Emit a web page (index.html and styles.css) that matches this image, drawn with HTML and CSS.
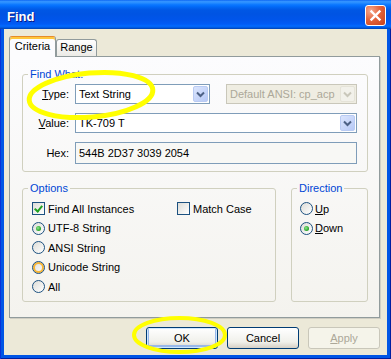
FILE: index.html
```html
<!DOCTYPE html>
<html lang="en">
<head>
    <meta charset="UTF-8">
    <title>Find</title>
    <link rel="stylesheet" href="styles.css">
</head>
<body>
    <div class="window">
        <div class="titlebar">
            <span class="title">Find</span>
            <span class="close">
                <svg viewBox="0 0 19 19" width="19" height="19">
                    <path d="M5.5 5.5 L13.5 13.5 M13.5 5.5 L5.5 13.5" stroke="#fff" stroke-width="2.4" stroke-linecap="square" fill="none"/>
                </svg>
            </span>
        </div>
        <div class="frame">
            <div class="client">
                <div class="tabs">
                    <div class="tab active">Criteria</div>
                    <div class="tab">Range</div>
                </div>
                <div class="panel">
                    <fieldset class="group find-what">
                        <legend>Find What:</legend>
                        <div class="fields">
                            <span class="lbl"><u>T</u>ype:</span>
                            <div class="type-row">
                                <div class="combo type-combo">
                                    <span class="val">Text String</span>
                                    <span class="drop"><svg viewBox="0 0 15 16" width="15" height="16"><path d="M4 6.5 L7.5 10 L11 6.5" stroke="#4d6185" stroke-width="2" fill="none"/></svg></span>
                                </div>
                                <div class="combo enc-combo disabled">
                                    <span class="val">Default ANSI: cp_acp</span>
                                    <span class="drop"><svg viewBox="0 0 15 16" width="15" height="16"><path d="M4 6.5 L7.5 10 L11 6.5" stroke="#c9c7ba" stroke-width="2" fill="none"/></svg></span>
                                </div>
                            </div>
                            <span class="lbl"><u>V</u>alue:</span>
                            <div class="combo">
                                <span class="val">TK-709 T</span>
                                <span class="drop"><svg viewBox="0 0 15 16" width="15" height="16"><path d="M4 6.5 L7.5 10 L11 6.5" stroke="#4d6185" stroke-width="2" fill="none"/></svg></span>
                            </div>
                            <span class="lbl">Hex:</span>
                            <div class="textbox">544B 2D37 3039 2054</div>
                        </div>
                    </fieldset>

                    <div class="lower">
                        <fieldset class="group options">
                            <legend>Options</legend>
                            <div class="opts">
                                <div class="opt-row">
                                    <label class="item find-all"><span class="check checked"></span>Find All Instances</label>
                                    <label class="item"><span class="check"></span>Match Case</label>
                                </div>
                                <label class="item"><span class="radio checked"></span>UTF-8 String</label>
                                <label class="item"><span class="radio"></span>ANSI String</label>
                                <label class="item"><span class="radio hot"></span>Unicode String</label>
                                <label class="item"><span class="radio"></span>All</label>
                            </div>
                        </fieldset>
                        <fieldset class="group direction">
                            <legend>Direction</legend>
                            <div class="opts dir">
                                <label class="item"><span class="radio"></span><span><u>U</u>p</span></label>
                                <label class="item"><span class="radio checked"></span><span><u>D</u>own</span></label>
                            </div>
                        </fieldset>
                    </div>
                </div>
                <div class="buttons">
                    <button class="btn default">OK</button>
                    <button class="btn">Cancel</button>
                    <button class="btn" disabled><u>A</u>pply</button>
                </div>
            </div>
        </div>

        <svg class="marks" viewBox="0 0 391 359" width="391" height="359">
            <ellipse cx="91" cy="95" rx="62" ry="22" transform="rotate(-5 91 95)" fill="none" stroke="#ffff00" stroke-width="5"/>
            <ellipse cx="179.5" cy="335" rx="45.5" ry="17" fill="none" stroke="#ffff00" stroke-width="4"/>
        </svg>
    </div>
</body>
</html>
```

FILE: styles.css
```css
* {
    margin: 0;
    padding: 0;
    box-sizing: border-box;
}

body {
    background-color: #0055e5;
    font-family: 'Liberation Sans', Arial, sans-serif;
    font-size: 11px;
    color: #000;
}

.window {
    position: relative;
    width: 391px;
    height: 359px;
    display: flex;
    flex-direction: column;
}

/* title bar */
.titlebar {
    height: 29px;
    flex: none;
    display: flex;
    justify-content: space-between;
    align-items: flex-start;
    padding: 0 5px 0 7px;
    background: linear-gradient(#0058ee 0px, #3593ff 1px, #288eff 3px, #127dff 4px, #036ffc 6px, #0262ee 8px, #0057e5 10px, #0054e3 14px, #0055eb 20px, #005bf5 24px, #026afe 26px, #0062ef 27px, #0052d6 28px, #0040ab 29px);
}

.title {
    padding-top: 9px;
    line-height: 15px;
    font-size: 13px;
    font-weight: bold;
    color: #fff;
    text-shadow: 1px 1px 0 #0a1883;
}

.close {
    margin-top: 5px;
    width: 21px;
    height: 21px;
    border: 1px solid #fff;
    border-radius: 3px;
    background: radial-gradient(circle at 25% 25%, #f5a98e 0%, #e4643c 45%, #c8401a 100%);
    display: flex;
}

/* window frame */
.frame {
    flex: 1;
    background-color: #0055e5;
    padding: 0 4px 4px;
    box-shadow: inset 1px 0 0 #0831d9, inset -1px 0 0 #001ea0, inset 0 -1px 0 #001ea0;
}

.client {
    height: 100%;
    background-color: #ece9d8;
    padding: 7px 7px 0 5px;
}

/* tabs */
.tabs {
    display: flex;
    align-items: flex-end;
    height: 20px;
}

.tab {
    border: 1px solid #919b9c;
    border-bottom: none;
    border-radius: 3px 3px 0 0;
    line-height: 13px;
    text-align: center;
}

.tab.active {
    position: relative;
    z-index: 1;
    width: 47px;
    height: 21px;
    margin-bottom: -1px;
    padding-top: 3px;
    border-top: 1px solid #e68b2c;
    box-shadow: inset 0 2px 0 #ffc73c;
    background-color: #fcfcfe;
}

.tab:not(.active) {
    width: 41px;
    height: 17px;
    padding-top: 1px;
    background: linear-gradient(#fefefe, #ecebe6);
}

.panel {
    height: 262px;
    border: 1px solid #919b9c;
    background: linear-gradient(#fcfcfe, #f4f3ee);
    box-shadow: 1px 1px 0 #d0cec3;
    padding: 11px 11px 0 12px;
}

/* group boxes */
.group {
    border: 1px solid #d0d0bf;
    border-radius: 3px;
    min-width: 0;
}

.group legend {
    margin-left: 5px;
    padding: 0 2px;
    line-height: 13px;
    color: #0046d5;
}

.fields {
    display: grid;
    grid-template-columns: 46px 1fr;
    column-gap: 6px;
    row-gap: 9px;
    align-items: center;
    padding: 3px 10px 7px 0;
}

.lbl {
    text-align: right;
}

.type-row {
    display: flex;
    justify-content: space-between;
}

.combo {
    height: 20px;
    border: 1px solid #7f9db9;
    background-color: #fff;
    display: flex;
    align-items: center;
    justify-content: space-between;
    padding: 0 1px 0 3px;
}

.type-combo {
    width: 135px;
}

.enc-combo {
    width: 131px;
}

.drop {
    width: 15px;
    height: 16px;
    border: 1px solid #b9cbf3;
    border-radius: 2px;
    background: linear-gradient(135deg, #dbe5fd, #b7c9f6);
    display: flex;
}

.drop svg {
    margin: -1px;
}

.combo.disabled {
    border-color: #c9c7ba;
    background-color: #efede2;
    color: #aca899;
}

.combo.disabled .drop {
    border-color: #e5e3d8;
    background: #f2f1ea;
}

.textbox {
    height: 22px;
    border: 1px solid #7f9db9;
    background-color: #f8f8f5;
    padding: 4px 3px 0;
}

/* lower groups */
.lower {
    display: flex;
    gap: 15px;
    margin-top: 10px;
}

.options {
    flex: 1;
}

.direction {
    width: 77px;
}

.opts {
    display: flex;
    flex-direction: column;
    padding: 4px 0 4px 9px;
}

.opts.dir {
    padding-left: 8px;
}

.opt-row {
    display: flex;
}

.item {
    height: 19.5px;
    flex: none;
    display: flex;
    align-items: center;
    gap: 3px;
}

.dir .item {
    gap: 2px;
}

.find-all {
    width: 145px;
}

.check {
    width: 13px;
    height: 13px;
    border: 1px solid #1c5180;
    background: linear-gradient(135deg, #dcdcd7, #fff);
    position: relative;
}

.check.checked::after {
    content: "";
    position: absolute;
    left: 3px;
    top: 1px;
    width: 3px;
    height: 6px;
    border: solid #21a121;
    border-width: 0 2px 2px 0;
    transform: rotate(40deg);
}

.radio {
    width: 13px;
    height: 13px;
    border: 1px solid #1c5180;
    border-radius: 50%;
    background: linear-gradient(135deg, #dcdcd7, #fff);
    position: relative;
}

.radio.checked::after {
    content: "";
    position: absolute;
    left: 3px;
    top: 3px;
    width: 5px;
    height: 5px;
    border-radius: 50%;
    background: radial-gradient(circle at 40% 40%, #8ee68e, #21a121 70%);
}

.radio.hot {
    box-shadow: inset 0 0 0 2px #f8b636;
}

/* buttons */
.buttons {
    display: flex;
    justify-content: flex-end;
    gap: 9px;
    padding-top: 9px;
}

.btn {
    width: 72px;
    height: 22px;
    border: 1px solid #003c74;
    border-radius: 3px;
    background: linear-gradient(#fff, #f0f0ea 70%, #d6d0c5);
    font-family: 'Liberation Sans', Arial, sans-serif;
    font-size: 11px;
    color: #000;
}

.btn.default {
    box-shadow: inset 0 0 0 1px #cee7ff, inset 0 -1px 0 2px #98b8ea;
}

.btn:disabled {
    border-color: #c9c7ba;
    background: #f5f4ea;
    color: #aca899;
}

/* yellow markings over the dialog */
.marks {
    position: absolute;
    left: 0;
    top: 0;
    pointer-events: none;
}
```
